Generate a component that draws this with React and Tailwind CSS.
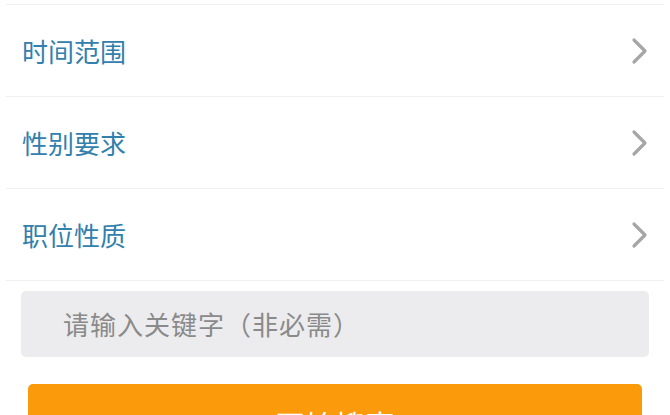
const rows = ["时间范围", "性别要求", "职位性质"];

export default function App() {
  return (
    <div
      className="w-[670px] h-[415px] overflow-hidden bg-white"
      style={{ fontFamily: '"Noto Sans CJK SC", "Noto Sans", sans-serif' }}
    >
      <div className="h-[4px]" />
      <div className="mx-[6px] border-t border-[#f0f0f0]">
        {rows.map((label) => (
          <div
            key={label}
            className="h-[92px] flex items-center justify-between border-b border-[#f0f0f0] pl-[16px] pr-[16px]"
          >
            <span className="text-[26px] text-[#3280ab] leading-none">{label}</span>
            <svg width="17" height="28" viewBox="0 0 17 28" fill="none">
              <path
                d="M3 3l11 11-11 11"
                stroke="#a6a6a6"
                strokeWidth="3.2"
                strokeLinecap="round"
                strokeLinejoin="round"
              />
            </svg>
          </div>
        ))}
      </div>
      <div className="px-[21px] pt-[10px]">
        <div className="h-[66px] rounded-[5px] bg-[#ececee] flex items-center pl-[42px]">
          <span className="text-[26px] tracking-[1px] text-[#8a8a8a] leading-none">
            请输入关键字（非必需）
          </span>
        </div>
      </div>
      <div className="px-[28px] pt-[27px]">
        <button className="w-full h-[72px] rounded-[5px] bg-[#fb9a0b] text-white text-[30px] leading-none pt-[8px]">
          开始搜索
        </button>
      </div>
    </div>
  );
}
